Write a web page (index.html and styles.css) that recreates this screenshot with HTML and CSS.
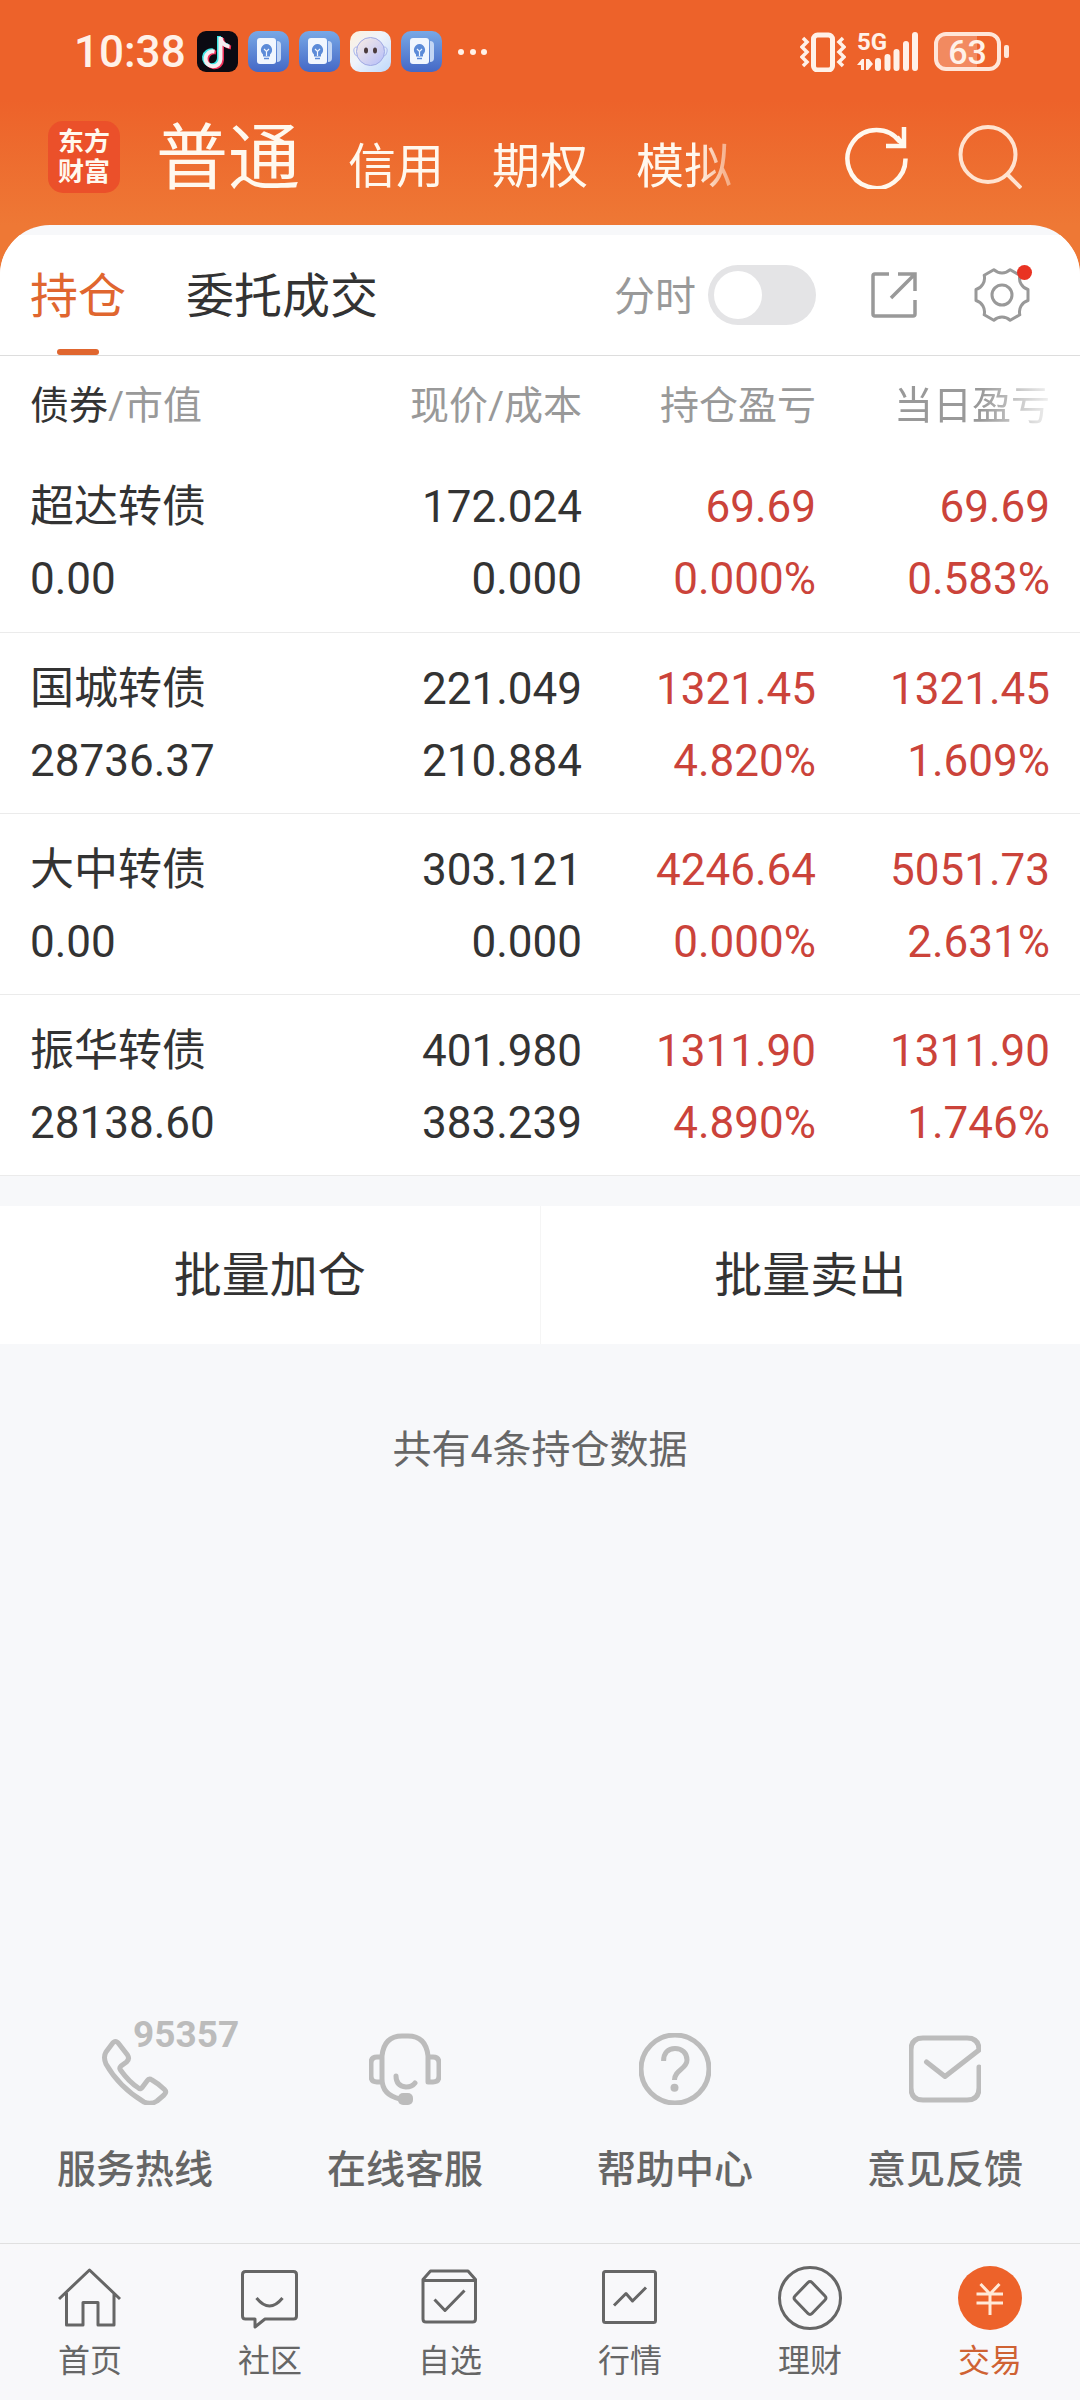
FILE: index.html
```html
<!DOCTYPE html>
<html lang="zh-CN">
<head>
<meta charset="utf-8">
<meta name="viewport" content="width=device-width, initial-scale=1">
<title>持仓</title>
<link rel="stylesheet" href="styles.css">
</head>
<body>
<svg class="defs" aria-hidden="true">
  <defs>
    <linearGradient id="blue" x1="0" y1="0" x2="0" y2="1"><stop offset="0" stop-color="#78a8e6"/><stop offset="1" stop-color="#4468c6"/></linearGradient>
    <linearGradient id="pale" x1="0" y1="0" x2="1" y2="1"><stop offset="0" stop-color="#fdf1dd"/><stop offset=".45" stop-color="#eef3fb"/><stop offset="1" stop-color="#bdd8fb"/></linearGradient>
    <linearGradient id="face" x1="0" y1="0" x2="1" y2="1"><stop offset="0" stop-color="#fbeee4"/><stop offset="1" stop-color="#b4bdfa"/></linearGradient>
    <symbol id="idea" viewBox="0 0 41 41">
      <rect width="41" height="41" rx="10" fill="url(#blue)"/>
      <path d="M29 10q4 0 4 4v13q0 4-4 4z" fill="#c3d6f4"/>
      <rect x="9" y="7" width="19" height="26" rx="3" fill="#f1f6fe"/>
      <path d="M18.500 13a6 6 0 0 0-3.500 10.500v2h7v-2A6 6 0 0 0 18.500 13z" fill="#5c8bd8"/>
      <path d="M16 18l2.500 2.500L21 18M18.500 20.500V25" fill="none" stroke="#f1f6fe" stroke-width="1.200"/>
      <path d="M16 27.500h5" stroke="#5c8bd8" stroke-width="1.500"/>
    </symbol>
  </defs>
</svg>

<header class="top">
  <div class="status">
    <span class="clock">10:38</span>
    <div class="apps">
      <svg viewBox="0 0 41 41"><rect width="41" height="41" rx="9" fill="#0b0a12"/>
        <g fill="none" stroke-width="4"><path d="M18 20.500a7.500 7.500 0 1 0 6 7.500V6c0 5 4 9 9 9.500" stroke="#f0305a" transform="translate(1 1)"/><path d="M18 20.500a7.500 7.500 0 1 0 6 7.500V6c0 5 4 9 9 9.500" stroke="#3ee6e4" transform="translate(-2 -1)"/><path d="M17.500 20.500a7.500 7.500 0 1 0 6 7.500V6c0 5 4 9 9 9.500" stroke="#f4eef0"/></g></svg>
      <svg><use href="#idea"/></svg>
      <svg><use href="#idea"/></svg>
      <svg viewBox="0 0 41 41"><rect width="41" height="41" rx="10" fill="url(#pale)"/>
        <path d="M7 16q-4 0-3 5 1 4 3 4M34 16q4 0 3 5-1 4-3 4" fill="none" stroke="#a9b6ee"/><circle cx="20.500" cy="20.500" r="14" fill="url(#face)" stroke="#9fa9e4"/><ellipse cx="16" cy="19.500" rx="2" ry="3" fill="#4a3a3c"/><ellipse cx="25" cy="19.500" rx="2" ry="3" fill="#4a3a3c"/></svg>
      <svg><use href="#idea"/></svg>
    </div>
    <svg class="more" viewBox="0 0 30 8" fill="#fff1e8"><circle cx="3" cy="4" r="3"/><circle cx="15" cy="4" r="3"/><circle cx="26" cy="4" r="3"/></svg>
    <div class="signals">
      <svg class="vibrate" viewBox="0 0 46 40" fill="none" stroke="#fff1e8"><rect x="13.500" y="3" width="19" height="35" rx="4" stroke-width="5"/><path d="M3 6l4 4-5 5 5 5-5 5 5 5-4 4M43 6l-4 4 5 5-5 5 5 5-5 5 4 4" stroke-width="3.500"/></svg>
      <div class="network">
        <span class="gen">5G</span>
        <svg viewBox="0 0 64 40"><path d="M21 36v-7M30.500 36V25M39.500 36V20M49 36V12M58 36V3" stroke="#fff1e8" stroke-width="6" stroke-linecap="round"/><path d="M0 33l5-6h2v11H4v-5zM9 27h3l4 5-5 6H9z" fill="#fff1e8"/></svg>
      </div>
      <div class="battery"><span class="level">63</span></div>
    </div>
  </div>
  <div class="account">
    <div class="logo"><span>东方</span><span>财富</span></div>
    <nav class="modes">
      <a class="current" href="#">普通</a>
      <a href="#">信用</a>
      <a href="#">期权</a>
      <a href="#">模拟</a>
    </nav>
    <button class="tool" type="button" aria-label="刷新"><svg viewBox="0 0 64 64" fill="none" stroke="#fff8ee" stroke-width="4.500"><path d="M60.500 33.500A29 29 0 1 1 55 17M41 21h18V2M59 21L52 12"/></svg></button>
    <button class="tool" type="button" aria-label="搜索"><svg viewBox="0 0 64 64" fill="none" stroke="#ffe3d0" stroke-width="4"><circle cx="30" cy="29.500" r="27.500"/><path d="M49 49l14 14"/></svg></button>
  </div>
</header>

<main class="sheet">
  <div class="bar">
    <nav class="tabs">
      <a class="active" href="#">持仓</a>
      <a href="#">委托成交</a>
    </nav>
    <label class="switch"><span>分时</span><input type="checkbox"></label>
    <button class="share" type="button" aria-label="分享"><svg viewBox="0 0 46 46" fill="none" stroke="#999" stroke-width="3.500"><path d="M18 2H4Q2 2 2 4V42Q2 44 4 44H42Q44 44 44 42V28M27 2H44V19M44 2L20 26"/></svg></button>
    <button class="gear" type="button" aria-label="设置"><svg viewBox="-28 -28 56 56" fill="none" stroke="#999" stroke-width="3" stroke-linejoin="round"><path d="M26-5.500V5.500A12 12 0 0 0 17.800 19.800L8.200 25.300A12 12 0 0 0-8.200 25.300L-17.800 19.800A12 12 0 0 0-26 5.500V-5.500A12 12 0 0 0-17.800-19.800L-8.200-25.300A12 12 0 0 0 8.200-25.300L17.800-19.800A12 12 0 0 0 26-5.500Z"/><circle r="10"/></svg><i class="dot"></i></button>
  </div>

  <table class="holdings">
    <colgroup><col><col class="price"><col class="total"><col class="daily"></colgroup>
    <thead>
      <tr><th><b>债券</b>/市值</th><th>现价/成本</th><th>持仓盈亏</th><th class="fade">当日盈亏</th></tr>
    </thead>
    <tbody>
      <tr><td>超达转债<br>0.00</td><td>172.024<br>0.000</td><td>69.69<br>0.000%</td><td>69.69<br>0.583%</td></tr>
      <tr><td>国城转债<br>28736.37</td><td>221.049<br>210.884</td><td>1321.45<br>4.820%</td><td>1321.45<br>1.609%</td></tr>
      <tr><td>大中转债<br>0.00</td><td>303.121<br>0.000</td><td>4246.64<br>0.000%</td><td>5051.73<br>2.631%</td></tr>
      <tr><td>振华转债<br>28138.60</td><td>401.980<br>383.239</td><td>1311.90<br>4.890%</td><td>1311.90<br>1.746%</td></tr>
    </tbody>
  </table>

  <div class="batch">
    <button type="button">批量加仓</button>
    <button type="button">批量卖出</button>
  </div>
  <p class="count">共有4条持仓数据</p>

  <div class="services">
    <a href="#"><span class="pic"><svg viewBox="0 0 72 72"><path d="M13 11Q16.400 6 20 11L28.500 22Q31 26 27.500 29L22 33Q20 35 21.500 37Q30 49 39.500 55Q41.500 57 43.500 54L48 48Q50 45 53 47Q60 51 65.500 56.500Q68 59 65 62L58 68Q52 72 45 69Q20 54 7 31Q4 24 7 19Z"/></svg><span class="number">95357</span></span>服务热线</a>
    <a href="#"><span class="pic"><svg viewBox="0 0 72 72"><path d="M31 66Q13 62 13 46V23Q15 3 33 3H39Q57 3 59 23V49H64Q70 49 70 43V30Q70 24 64 24H59M13 24H8Q2 24 2 30V43Q2 49 8 49H13M27 43Q27 53 37 54 43 54 46 50"/><rect x="29" y="60" width="15" height="12" rx="5" fill="#bcbcbc" stroke="none"/></svg></span>在线客服</a>
    <a href="#"><span class="pic"><svg viewBox="0 0 72 72"><circle cx="36" cy="36" r="34"/><path stroke-linecap="butt" d="M24.600 28C24.600 20 29 15.500 36 15.500S48 20 48 27C48 36 35.500 37 35.500 47"/><circle cx="35.500" cy="54.700" r="4" fill="#bcbcbc" stroke="none"/></svg></span>帮助中心</a>
    <a href="#"><span class="pic"><svg viewBox="0 0 72 72"><path d="M70 34V55Q70 67 58 67H14Q2 67 2 55V17Q2 5 14 5H58Q70 5 70 17L36 43.500 17.500 29"/></svg></span>意见反馈</a>
  </div>
</main>

<nav class="dock">
  <a href="#"><svg viewBox="0 0 64 64"><path d="M1 33L31.500 4 62 33M8.500 27V59H25V36.500H40V59H56V27"/></svg>首页</a>
  <a href="#"><svg viewBox="0 0 64 64"><path d="M7.500 5.500H55.500Q58.500 5.500 58.500 8.500V50Q58.500 53 55.500 53H27L17 61V53H7.500Q4.500 53 4.500 50V8.500Q4.500 5.500 7.500 5.500ZM18.500 32Q31.500 48 44.500 32"/></svg>社区</a>
  <a href="#"><svg viewBox="0 0 64 64"><path d="M5 13.500L12.500 5H50L57.500 13.500V53Q57.500 56 54.500 56H8Q5 56 5 53ZM5 14.500H57.500M16.500 33.500L27 44.500 46.500 24.500"/></svg>自选</a>
  <a href="#"><svg viewBox="0 0 64 64"><rect x="5.500" y="5.500" width="52" height="51" rx="2"/><path d="M16 39.500L28 27.500 34.500 35 48 21.500"/></svg>行情</a>
  <a href="#"><svg viewBox="0 0 64 64"><circle cx="32" cy="32" r="30.500"/><path d="M30 16.500Q32 14.500 34 16.500L47 30Q49 32 47 34L34 47.500Q32 49.500 30 47.500L17 34Q15 32 17 30Z"/></svg>理财</a>
  <a class="here" href="#"><svg viewBox="0 0 64 64"><circle cx="32" cy="32" r="32" fill="#ed622a" stroke="none"/><path stroke="#ffe9d8" d="M22.500 18L32 28 41.500 18M18.500 28H45M18.500 37H45M32 28V49"/></svg>交易</a>
</nav>
</body>
</html>
```

FILE: styles.css
```css
* { box-sizing: border-box; }

body {
  margin: 0;
  min-height: 100vh;
  display: flex;
  flex-direction: column;
  background: #f7f8fa;
  color: #333;
  font-family: Roboto, "Noto Sans CJK SC", sans-serif;
}

a { color: inherit; text-decoration: none; }
button { border: 0; padding: 0; background: none; color: inherit; font: inherit; }
svg { display: block; }
.defs { position: absolute; width: 0; height: 0; }

/* orange header */
.top {
  height: 285px;
  margin-bottom: -60px;
  background: linear-gradient(#ed622a 100px, #ee7835 225px);
  color: #fff8ee;
}

.status {
  display: flex;
  align-items: center;
  height: 103px;
  padding: 0 71px 0 74px;
  color: #fff1e8;
}
.clock { width: 113px; margin-right: 10px; font-size: 44px; font-weight: 500; line-height: 52px; }
.apps { display: flex; gap: 10px; }
.apps svg { width: 41px; height: 41px; }
.more { width: 30px; height: 8px; margin-left: 16px; }
.signals { display: flex; align-items: center; margin-left: auto; }
.vibrate { width: 46px; height: 40px; margin-right: 11px; }
.network { position: relative; width: 64px; height: 40px; margin-right: 13px; }
.gen { position: absolute; left: 0; top: 0; font-size: 24px; font-weight: 700; line-height: 20px; }
.battery {
  position: relative;
  width: 67px;
  height: 39px;
  margin-right: 8px;
  border: 4px solid #ffe6d9;
  border-radius: 12px;
  background: linear-gradient(90deg, #f28a60 66%, transparent 66%);
}
.battery::after {
  content: "";
  position: absolute;
  left: 66px;
  top: 9px;
  width: 5px;
  height: 13px;
  border-radius: 2px;
  background: #ffe6d9;
}
.level { display: block; text-align: center; font-size: 34px; font-weight: 500; line-height: 32px; }

.account {
  display: flex;
  align-items: center;
  height: 108px;
  padding: 0 58px 0 48px;
}
.logo {
  display: flex;
  flex-direction: column;
  justify-content: center;
  width: 72px;
  height: 72px;
  border-radius: 15px;
  background: #eb502a;
  text-align: center;
  font-size: 26px;
  font-weight: 700;
  line-height: 30px;
}
.modes {
  flex: 1;
  display: flex;
  align-items: baseline;
  gap: 48px;
  margin-left: 36px;
  padding-top: 12px;
  font-size: 48px;
  line-height: 100px;
  -webkit-mask: linear-gradient(90deg, #000 540px, transparent 600px);
  mask: linear-gradient(90deg, #000 540px, transparent 600px);
}
.modes .current { font-size: 72px; }
.tool svg { width: 64px; height: 64px; }
.tool + .tool { margin-left: 49px; }

/* white sheet */
.sheet {
  flex: 1;
  display: flex;
  flex-direction: column;
  padding-top: 10px;
  border-radius: 50px 50px 0 0;
  background: #f7f8fa;
  overflow: hidden;
}
.bar {
  display: flex;
  align-items: center;
  height: 121px;
  padding: 0 50px 0 30px;
  border-bottom: 1px solid #ddd;
  background: #fff;
}
.tabs { display: flex; gap: 60px; margin-right: auto; font-size: 48px; line-height: 116px; }
.tabs a { padding-top: 4px; }
.tabs .active { position: relative; color: #e0662f; }
.tabs .active::after {
  content: "";
  position: absolute;
  left: 50%;
  bottom: 0;
  width: 42px;
  height: 6px;
  margin-left: -21px;
  border-radius: 3px;
  background: #e0662f;
}
.switch { display: flex; align-items: center; gap: 12px; color: #999; font-size: 41px; }
.switch span { padding-bottom: 4px; }
.switch input {
  appearance: none;
  width: 108px;
  height: 60px;
  margin: 0;
  padding: 6px;
  border-radius: 30px;
  background: #e4e4e6;
}
.switch input::before { content: ""; display: block; width: 48px; height: 48px; border-radius: 50%; background: #fff; }
.switch input:checked { background: #ed622a; padding-left: 54px; }
.share { margin-left: 55px; }
.share svg { width: 46px; height: 46px; }
.gear { position: relative; margin-left: 57px; }
.gear svg { width: 56px; height: 56px; }
.dot { position: absolute; right: -2px; top: -2px; width: 15px; height: 15px; border-radius: 50%; background: #e93323; }

/* holdings */
.holdings { width: 100%; table-layout: fixed; border-collapse: collapse; background: #fff; }
.price { width: 250px; }
.total { width: 234px; }
.daily { width: 264px; }
th { height: 95px; padding: 0 0 4px; color: #999; font-size: 39px; font-weight: 400; text-align: right; }
th b { color: #333; font-weight: 400; }
td { height: 181px; padding: 4px 0 0; border-bottom: 1px solid #ebebeb; font-size: 44px; line-height: 72px; text-align: right; }
th:first-child, td:first-child { padding-left: 30px; text-align: left; }
th:last-child, td:last-child { padding-right: 30px; }
td:nth-child(n+3) { color: #cb433a; }
.fade {
  -webkit-mask: linear-gradient(90deg, #000 165px, transparent 245px);
  mask: linear-gradient(90deg, #000 165px, transparent 245px);
}

.batch { display: flex; margin-top: 30px; background: #fff; }
.batch button { flex: 1; height: 138px; padding-bottom: 8px; font-size: 48px; }
.batch button + button { border-left: 1px solid #f5f5f5; }
.count { margin: 78px 0 0; text-align: center; color: #666; font-size: 39px; line-height: 56px; }

/* service shortcuts */
.services { display: flex; margin-top: auto; padding-bottom: 45px; }
.services a {
  flex: 1;
  display: flex;
  flex-direction: column;
  align-items: center;
  gap: 37px;
  color: #666;
  font-size: 39px;
  font-weight: 500;
  line-height: 56px;
}
.pic { position: relative; }
.pic svg { width: 72px; height: 72px; fill: none; stroke: #bcbcbc; stroke-width: 5; stroke-linecap: round; stroke-linejoin: round; }
.number { position: absolute; left: 34px; top: -16px; color: #bcbcbc; font-size: 37px; font-weight: 700; line-height: 36px; }

/* bottom navigation */
.dock { display: flex; height: 157px; padding-top: 22px; border-top: 1px solid #e0e0e0; background: #f8f8fa; }
.dock a {
  flex: 1;
  display: flex;
  flex-direction: column;
  align-items: center;
  gap: 11px;
  color: #666;
  font-size: 32px;
  line-height: 40px;
}
.dock svg { width: 64px; height: 64px; fill: none; stroke: #666; stroke-width: 3; stroke-linejoin: round; }
.dock .here { color: #cf6233; }
```
